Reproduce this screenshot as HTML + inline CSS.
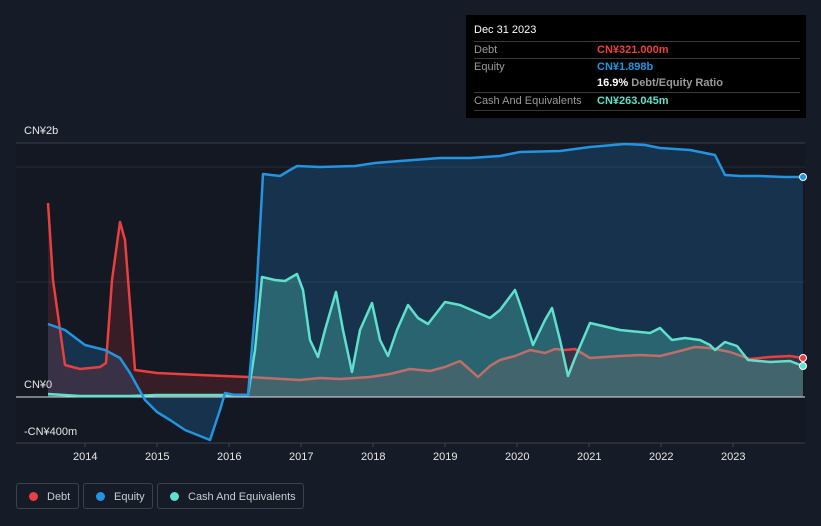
<!DOCTYPE html><html><head><style>
body{margin:0;width:821px;height:526px;background:#161c27;font-family:"Liberation Sans",sans-serif;overflow:hidden;position:relative}
.tt{position:absolute;left:466px;top:15px;width:340px;height:103px;background:#000;color:#fff;font-size:11px}
.tt .r{position:absolute;left:8px;right:6px;height:17px;border-top:1px solid #3a3a3a;line-height:17px;color:#9a9a9a}
.tt .v{position:absolute;left:123px;font-weight:bold}
.lg{position:absolute;top:483px;height:26px;border:1px solid #3a4150;border-radius:3px;color:#c8cdd4;font-size:11px;line-height:26px;box-sizing:border-box;white-space:nowrap}
.lg i{display:inline-block;width:9px;height:9px;border-radius:50%;margin:0 9px 0 12px;vertical-align:-1px}
.ax{position:absolute;color:#e6e6e6;font-size:11px}
</style></head><body>
<svg width="821" height="526" style="position:absolute;left:0;top:0">
<rect x="16" y="143" width="789" height="300" fill="#131822"/>
<line x1="16" y1="143" x2="805" y2="143" stroke="#3a404c"/>
<line x1="16" y1="167" x2="805" y2="167" stroke="#262c37"/>
<line x1="16" y1="282" x2="805" y2="282" stroke="#262c37"/>
<line x1="16" y1="443" x2="805" y2="443" stroke="#3a404c"/>
<g stroke="#3a404c"><line x1="85" y1="443" x2="85" y2="447"/><line x1="157" y1="443" x2="157" y2="447"/><line x1="229" y1="443" x2="229" y2="447"/><line x1="301" y1="443" x2="301" y2="447"/><line x1="373" y1="443" x2="373" y2="447"/><line x1="445" y1="443" x2="445" y2="447"/><line x1="517" y1="443" x2="517" y2="447"/><line x1="589" y1="443" x2="589" y2="447"/><line x1="661" y1="443" x2="661" y2="447"/><line x1="733" y1="443" x2="733" y2="447"/></g>
<polygon fill="rgba(33,120,190,0.28)" points="48,397 48,324 65,330 85,345 105,350 120,358 130,373 145,400 157,412 170,420 185,430 205,438 210,440 220,410 225,393 235,395 248,395 256,300 263,174 280,176 290,170 297,166 320,167 355,166 375,163 400,161 440,158 470,158 500,156 520,152 560,151 590,147 625,144 645,145 660,148 690,150 715,155 725,175 740,176 760,176 785,177 803,177 803,397"/>
<polygon fill="rgba(200,50,50,0.2)" points="48,397 48,203 53,280 65,365 80,369 100,367 106,363 112,280 120,222 125,240 135,370 157,373 200,375 248,377 300,380 320,378 340,379 370,377 390,374 410,369 430,371 445,367 460,361 468,368 478,377 490,366 500,360 515,356 530,350 545,353 555,349 565,350 575,349 590,358 620,356 640,355 660,356 680,351 695,347 710,348 730,352 750,359 770,357 790,356 803,358 803,397"/>
<polyline fill="none" stroke-width="2.5" stroke-linejoin="round" stroke="#e8403f" points="48,203 53,280 65,365 80,369 100,367 106,363 112,280 120,222 125,240 135,370 157,373 200,375 248,377 300,380 320,378 340,379 370,377 390,374 410,369 430,371 445,367 460,361 468,368 478,377 490,366 500,360 515,356 530,350 545,353 555,349 565,350 575,349 590,358 620,356 640,355 660,356 680,351 695,347 710,348 730,352 750,359 770,357 790,356 803,358"/>
<polygon fill="rgba(90,220,200,0.3)" points="48,397 48,394 80,396 130,396 157,395 248,395 255,350 262,277 275,280 285,281 297,274 303,290 310,340 318,357 325,330 336,292 343,330 352,372 360,330 372,303 380,340 388,356 397,330 408,305 418,318 428,324 445,302 460,305 490,318 500,310 515,290 522,310 533,345 545,320 552,308 560,340 568,376 575,358 590,323 620,330 650,333 660,328 672,340 685,338 700,340 710,345 715,350 725,342 737,346 748,360 770,362 790,361 803,366 803,397"/>
<line x1="16" y1="397" x2="805" y2="397" stroke="#e0e0e0" stroke-width="1"/>
<g fill="none" stroke-width="2.5" stroke-linejoin="round">
<polyline stroke="#5ee0cc" points="48,394 80,396 130,396 157,395 248,395 255,350 262,277 275,280 285,281 297,274 303,290 310,340 318,357 325,330 336,292 343,330 352,372 360,330 372,303 380,340 388,356 397,330 408,305 418,318 428,324 445,302 460,305 490,318 500,310 515,290 522,310 533,345 545,320 552,308 560,340 568,376 575,358 590,323 620,330 650,333 660,328 672,340 685,338 700,340 710,345 715,350 725,342 737,346 748,360 770,362 790,361 803,366"/>
<polyline stroke="#2394e0" points="48,324 65,330 85,345 105,350 120,358 130,373 145,400 157,412 170,420 185,430 205,438 210,440 220,410 225,393 235,395 248,395 256,300 263,174 280,176 290,170 297,166 320,167 355,166 375,163 400,161 440,158 470,158 500,156 520,152 560,151 590,147 625,144 645,145 660,148 690,150 715,155 725,175 740,176 760,176 785,177 803,177"/>
</g>
<circle cx="803" cy="177" r="3.5" fill="#2394e0" stroke="#fff" stroke-width="1"/>
<circle cx="803" cy="358" r="3.5" fill="#e8403f" stroke="#fff" stroke-width="1"/>
<circle cx="803" cy="366" r="3.5" fill="#5ee0cc" stroke="#fff" stroke-width="1"/>
</svg>
<div class="ax" style="left:24px;top:125px">CN¥2b</div>
<div class="ax" style="left:24px;top:379px">CN¥0</div>
<div class="ax" style="left:24px;top:426px">-CN¥400m</div>
<div class="ax" style="left:73px;top:451px">2014</div><div class="ax" style="left:145px;top:451px">2015</div><div class="ax" style="left:217px;top:451px">2016</div><div class="ax" style="left:289px;top:451px">2017</div><div class="ax" style="left:361px;top:451px">2018</div><div class="ax" style="left:433px;top:451px">2019</div><div class="ax" style="left:505px;top:451px">2020</div><div class="ax" style="left:577px;top:451px">2021</div><div class="ax" style="left:649px;top:451px">2022</div><div class="ax" style="left:721px;top:451px">2023</div>
<div class="tt">
<div style="position:absolute;left:8px;top:9px;color:#fff">Dec 31 2023</div>
<div class="r" style="top:26px">Debt<span class="v" style="color:#e8403f">CN¥321.000m</span></div>
<div class="r" style="top:43px">Equity<span class="v" style="color:#2394e0">CN¥1.898b</span></div>
<div class="r" style="top:60px;border-top:none"><span class="v" style="color:#fff">16.9% <span style="color:#9a9a9a">Debt/Equity Ratio</span></span></div>
<div class="r" style="top:77px">Cash And Equivalents<span class="v" style="color:#5ee0cc">CN¥263.045m</span></div>
<div class="r" style="top:95px;height:0"></div>
</div>
<div class="lg" style="left:16px;width:63px"><i style="background:#e8403f"></i>Debt</div>
<div class="lg" style="left:83px;width:70px"><i style="background:#2394e0"></i>Equity</div>
<div class="lg" style="left:157px;width:147px"><i style="background:#5ee0cc"></i>Cash And Equivalents</div>
</body></html>
